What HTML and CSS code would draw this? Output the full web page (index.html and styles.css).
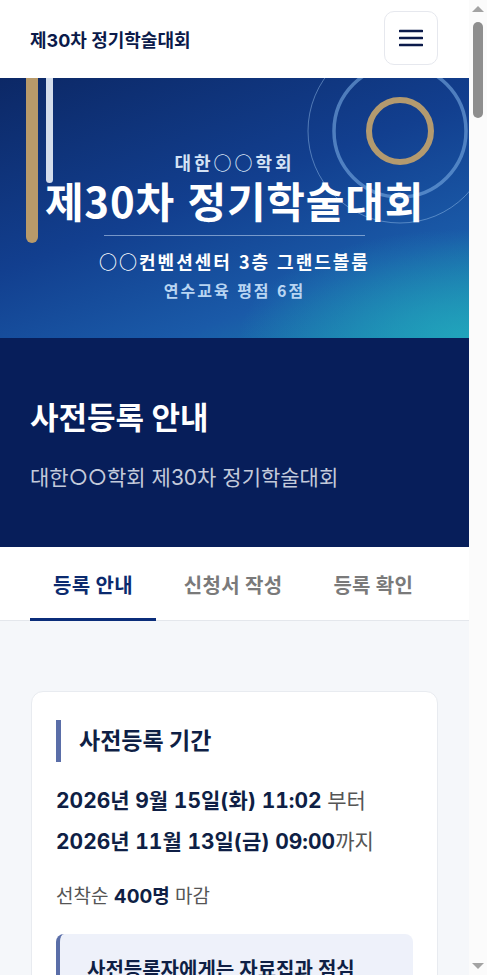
FILE: index.html
```html
<!DOCTYPE html>
<html lang="ko">
<head>
<meta charset="utf-8">
<meta name="viewport" content="width=device-width, initial-scale=1">
<title>사전등록 안내 - 제30차 정기학술대회</title>
<link rel="stylesheet" href="styles.css">
</head>
<body>
<div class="page">
<header class="site-header">
  <div class="brand">제30차 정기학술대회</div>
  <button class="menu-btn" aria-label="메뉴">
    <svg width="24" height="18" viewBox="0 0 24 18"><path d="M1 2h22M1 9h22M1 16h22" stroke="#0b1a4a" stroke-width="2.6" stroke-linecap="round"/></svg>
  </button>
</header>

<section class="hero">
  <span class="bar bar-gold"></span>
  <span class="bar bar-light"></span>
  <svg class="rings" width="200" height="200" viewBox="0 0 200 200">
    <circle cx="100" cy="100" r="92" fill="none" stroke="rgba(160,200,240,0.45)" stroke-width="1"/>
    <circle cx="100" cy="100" r="66" fill="none" stroke="rgba(120,170,225,0.6)" stroke-width="3.5"/>
    <circle cx="100" cy="100" r="31" fill="none" stroke="#b39a6f" stroke-width="6"/>
  </svg>
  <div class="hero-text">
    <p class="hero-org">대한○○학회</p>
    <h1 class="hero-title">제30차 정기학술대회</h1>
    <hr class="hero-rule">
    <p class="hero-place">○○컨벤션센터 3층 그랜드볼룸</p>
    <p class="hero-credit">연수교육 평점 6점</p>
  </div>
</section>

<section class="page-head">
  <h2 class="page-title">사전등록 안내</h2>
  <p class="page-sub">대한○○학회 제30차 정기학술대회</p>
</section>

<nav class="tabs">
  <a class="tab active">등록 안내</a>
  <a class="tab">신청서 작성</a>
  <a class="tab">등록 확인</a>
</nav>

<main class="content">
  <article class="card">
    <h3 class="card-title">사전등록 기간</h3>
    <p class="date-line"><b>2026년 9월 15일(화) 11:02</b> 부터</p>
    <p class="date-line"><b>2026년 11월 13일(금) 09:00</b>까지</p>
    <p class="limit">선착순 <b>400명</b> 마감</p>
    <div class="notice">
      <p>사전등록자에게는 자료집과 점심 식사가 제공됩니다.</p>
      <p class="notice-sub">현장등록자는 자료집 및 식사 제공이 제한될 수 있습니다.</p>
    </div>
  </article>

  <article class="card">
    <h3 class="card-title">등록비 안내</h3>
    <table class="fee">
      <thead><tr><th>구분</th><th>사전등록</th><th>현장등록</th></tr></thead>
      <tbody>
        <tr><td>정회원</td><td>50,000원</td><td>70,000원</td></tr>
        <tr><td>비회원</td><td>70,000원</td><td>90,000원</td></tr>
        <tr><td>전공의</td><td>30,000원</td><td>40,000원</td></tr>
        <tr><td>간호사·기사</td><td>20,000원</td><td>30,000원</td></tr>
        <tr><td>학생</td><td>면제</td><td>면제</td></tr>
      </tbody>
    </table>
    <p class="small">※ 등록비에는 자료집, 중식, 평점 관리비가 포함되어 있습니다.</p>
    <p class="small">※ 평생회원은 연회비가 면제됩니다.</p>
  </article>

  <article class="card">
    <h3 class="card-title">납부 방법</h3>
    <p class="text">무통장 입금 또는 신용카드 결제가 가능합니다.</p>
    <dl class="info">
      <dt>은행명</dt><dd>○○은행</dd>
      <dt>계좌번호</dt><dd>123-456789-01-234</dd>
      <dt>예금주</dt><dd>대한○○학회</dd>
    </dl>
    <p class="small">※ 입금자명은 반드시 등록자 성명으로 기재해 주십시오.</p>
    <p class="small">※ 입금 확인 후 등록이 완료되며, 확인 문자가 발송됩니다.</p>
    <p class="small">※ 단체 입금 시 사무국으로 명단을 보내주시기 바랍니다.</p>
  </article>

  <article class="card">
    <h3 class="card-title">취소 및 환불 규정</h3>
    <ul class="list">
      <li>사전등록 마감일까지 취소 시 전액 환불됩니다.</li>
      <li>사전등록 마감 이후 취소 시 환불이 불가합니다.</li>
      <li>환불은 학술대회 종료 후 일괄 처리됩니다.</li>
      <li>환불 요청은 사무국 이메일로 접수해 주십시오.</li>
      <li>카드 결제 취소는 카드사 사정에 따라 지연될 수 있습니다.</li>
    </ul>
  </article>

  <article class="card">
    <h3 class="card-title">연수평점 안내</h3>
    <p class="text">본 학술대회 참석 시 연수교육 평점 6점이 부여됩니다.</p>
    <ul class="list">
      <li>오전 세션 참석: 3점</li>
      <li>오후 세션 참석: 3점</li>
      <li>입실 및 퇴실 시 반드시 바코드를 인식해 주십시오.</li>
      <li>평점은 학술대회 종료 후 30일 이내에 등록됩니다.</li>
      <li>면허번호가 정확하지 않으면 평점 등록이 불가합니다.</li>
    </ul>
  </article>

  <article class="card">
    <h3 class="card-title">학술대회 일정</h3>
    <dl class="info">
      <dt>일시</dt><dd>2026년 11월 22일(일)</dd>
      <dt>장소</dt><dd>○○컨벤션센터 3층 그랜드볼룸</dd>
      <dt>08:30</dt><dd>등록</dd>
      <dt>09:00</dt><dd>개회사 및 축사</dd>
      <dt>09:20</dt><dd>Session Ⅰ</dd>
      <dt>10:50</dt><dd>Coffee Break</dd>
      <dt>11:10</dt><dd>Session Ⅱ</dd>
      <dt>12:30</dt><dd>점심 식사 및 총회</dd>
      <dt>13:30</dt><dd>Session Ⅲ</dd>
      <dt>15:00</dt><dd>Coffee Break</dd>
      <dt>15:20</dt><dd>Session Ⅳ</dd>
      <dt>16:50</dt><dd>Session Ⅴ</dd>
      <dt>18:00</dt><dd>폐회</dd>
    </dl>
  </article>

  <article class="card">
    <h3 class="card-title">오시는 길</h3>
    <p class="text">○○컨벤션센터 3층 그랜드볼룸</p>
    <ul class="list">
      <li>지하철: ○○역 3번 출구 도보 5분</li>
      <li>버스: ○○컨벤션센터 정류장 하차</li>
      <li>주차: 컨벤션센터 지하주차장 이용 (4시간 무료)</li>
      <li>대중교통 이용을 권장합니다.</li>
    </ul>
  </article>

  <article class="card">
    <h3 class="card-title">등록 시 유의사항</h3>
    <ul class="list">
      <li>등록 정보는 평점 등록에 사용되므로 정확히 입력해 주십시오.</li>
      <li>면허번호와 성명이 일치해야 평점이 등록됩니다.</li>
      <li>영수증은 등록 확인 메뉴에서 출력할 수 있습니다.</li>
      <li>이름표는 현장 등록데스크에서 수령하실 수 있습니다.</li>
      <li>중복 등록 시 사무국으로 연락 바랍니다.</li>
      <li>등록 정보 수정은 사전등록 마감일까지 가능합니다.</li>
    </ul>
  </article>

  <article class="card">
    <h3 class="card-title">문의처</h3>
    <dl class="info">
      <dt>사무국</dt><dd>대한○○학회 사무국</dd>
      <dt>전화</dt><dd>02-1234-5678</dd>
      <dt>팩스</dt><dd>02-1234-5679</dd>
      <dt>이메일</dt><dd>office@example.or.kr</dd>
      <dt>운영시간</dt><dd>평일 09:00 ~ 18:00</dd>
    </dl>
  </article>

  <a class="cta">사전등록 신청하기</a>
</main>

<footer class="site-footer">
  <p class="foot-name">대한○○학회</p>
  <p>주소: 서울특별시 ○○구 ○○로 123, 4층</p>
  <p>사업자등록번호: 123-45-67890 | 대표자: 홍길동</p>
  <p>전화: 02-1234-5678 | 이메일: office@example.or.kr</p>
  <p class="copy">Copyright © 대한○○학회. All rights reserved.</p>
</footer>
</div>

<div class="scrollbar" aria-hidden="true">
  <span class="sb-arrow sb-up"></span>
  <span class="sb-thumb"></span>
  <span class="sb-arrow sb-down"></span>
</div>
</body>
</html>
```

FILE: styles.css
```css
* { box-sizing: border-box; }
html, body { margin: 0; padding: 0; }
body {
  font-family: Inter, "Noto Sans CJK KR", "Noto Sans", sans-serif;
  color: #0f1f45;
  background: #fff;
  word-break: keep-all;
}
p, h1, h2, h3 { margin: 0; }

.page {
  width: 469px;
  background: #f5f7fa;
}

.site-header {
  height: 78px;
  background: #fff;
  display: flex;
  align-items: center;
  justify-content: space-between;
  padding: 0 31px 0 30px;
}
.brand {
  font-size: 18px;
  font-weight: 700;
  color: #0b1a4a;
}
.menu-btn {
  width: 54px;
  height: 54px;
  border: 1px solid #e6e8ee;
  border-radius: 10px;
  background: #fff;
  display: flex;
  align-items: center;
  justify-content: center;
  padding: 0;
  margin-top: -2px;
}

.hero {
  position: relative;
  height: 260px;
  overflow: hidden;
  background:
    radial-gradient(ellipse 70% 60% at 100% 100%, rgba(34,170,190,0.85), rgba(34,170,190,0) 70%),
    linear-gradient(160deg, #0c2866 0%, #123f8f 45%, #1a5aa8 75%, #1c86b0 100%);
  display: flex;
  align-items: flex-start;
  justify-content: center;
}
.bar {
  position: absolute;
  top: -8px;
  border-radius: 8px;
}
.bar-gold { left: 26px; width: 12px; height: 173px; background: #b89a6a; }
.bar-light { left: 46px; width: 7px; height: 113px; background: #d4ddeb; }
.rings { position: absolute; left: 300px; top: -47px; }

.hero-text {
  position: relative;
  display: flex;
  flex-direction: column;
  align-items: center;
  font-family: "Noto Sans CJK KR", sans-serif;
  padding-top: 72px;
}
.hero-org {
  font-size: 18px;
  font-weight: 700;
  color: #d4e2f4;
  line-height: 24px;
  letter-spacing: 3px;
}
.hero-title {
  font-size: 42px;
  font-weight: 700;
  color: #fff;
  line-height: 50px;
  letter-spacing: 0.8px;
  margin-top: 1px;
}
.hero-rule {
  width: 261px;
  border: 0;
  border-top: 1px solid rgba(200,220,245,0.55);
  margin: 10px 0 10px;
}
.hero-place {
  font-size: 18px;
  font-weight: 700;
  color: #fff;
  line-height: 30px;
  letter-spacing: 2px;
}
.hero-credit {
  font-size: 16px;
  font-weight: 700;
  color: #b9d5f2;
  line-height: 28px;
  letter-spacing: 2px;
}

.page-head {
  background: #071e5a;
  height: 209px;
  padding: 59px 30px 0;
}
.page-title {
  font-size: 31px;
  font-weight: 700;
  color: #fff;
  line-height: 42px;
}
.page-sub {
  font-size: 21px;
  color: #c3cadb;
  line-height: 28px;
  margin-top: 25px;
}

.tabs {
  background: #fff;
  height: 74px;
  display: flex;
  gap: 5px;
  padding: 0 30px;
  border-bottom: 1px solid #e4e7ec;
}
.tab {
  padding: 3px 23px 0;
  display: flex;
  align-items: center;
  font-size: 20px;
  font-weight: 700;
  color: #7a7a7a;
  letter-spacing: 0.3px;
  border-bottom: 3px solid transparent;
  margin-bottom: -1px;
}
.tab.active { color: #0b2a6e; border-bottom-color: #0b2d7a; }

.content {
  padding: 70px 31px 40px;
  display: flex;
  flex-direction: column;
  gap: 24px;
}
.card {
  background: #fff;
  border: 1px solid #e8ebf0;
  border-radius: 12px;
  padding: 28px 24px 30px;
}
.card-title {
  border-left: 5px solid #5a6ea8;
  padding-left: 18px;
  font-size: 23px;
  font-weight: 700;
  line-height: 42px;
  color: #0f1f45;
  margin-bottom: 18px;
}
.date-line {
  font-size: 21px;
  line-height: 41px;
  color: #555;
  font-variant-numeric: tabular-nums;
}
.date-line b { color: #0f1f45; font-weight: 700; }
.limit {
  font-size: 19px;
  color: #555;
  line-height: 30px;
  margin-top: 20px;
}
.limit b { color: #0f1f45; }
.notice {
  margin-top: 22px;
  background: #eef1fa;
  border-left: 4px solid #5a6ea8;
  border-radius: 8px;
  padding: 20px 24px 22px 27px;
}
.notice p {
  font-size: 20px;
  font-weight: 600;
  color: #0f1f45;
  line-height: 32px;
}
.notice .notice-sub {
  font-size: 15px;
  font-weight: 400;
  color: #555;
  line-height: 24px;
  margin-top: 8px;
}

.fee {
  width: 100%;
  border-collapse: collapse;
  font-size: 16px;
  margin-bottom: 16px;
}
.fee th, .fee td {
  border-bottom: 1px solid #e4e7ec;
  padding: 14px 6px;
  text-align: center;
}
.fee th { background: #f0f3f9; color: #0f1f45; font-weight: 700; }
.fee td { color: #333; }
.small { font-size: 14px; color: #666; line-height: 24px; }
.text { font-size: 17px; color: #333; line-height: 28px; margin-bottom: 14px; }
.info {
  display: grid;
  grid-template-columns: 90px 1fr;
  row-gap: 14px;
  font-size: 16px;
  margin: 0 0 16px;
}
.info dt { color: #5a6ea8; font-weight: 700; }
.info dd { margin: 0; color: #333; }
.list { margin: 0; padding-left: 20px; font-size: 16px; color: #333; line-height: 30px; }
.list li { margin-bottom: 8px; }

.cta {
  display: block;
  background: #0b2d7a;
  color: #fff;
  text-align: center;
  font-size: 19px;
  font-weight: 700;
  border-radius: 10px;
  padding: 20px 0;
  margin-top: 10px;
}

.site-footer {
  background: #0e1730;
  color: #9aa3b8;
  padding: 40px 30px 60px;
  font-size: 14px;
  line-height: 26px;
}
.foot-name { color: #fff; font-weight: 700; font-size: 17px; margin-bottom: 10px; }
.copy { margin-top: 18px; font-size: 13px; }

.scrollbar {
  position: fixed;
  top: 0;
  right: 0;
  width: 18px;
  height: 100vh;
  background: #fbfbfb;
  display: flex;
  flex-direction: column;
  align-items: center;
}
.sb-arrow {
  width: 0;
  height: 0;
  border-left: 6px solid transparent;
  border-right: 6px solid transparent;
}
.sb-up { border-bottom: 6px solid #a3a3a3; margin-top: 6px; }
.sb-down { border-top: 6px solid #a3a3a3; margin-top: auto; margin-bottom: 6px; }
.sb-thumb {
  width: 10px;
  height: 96px;
  margin-top: 10px;
  border-radius: 5px;
  background: #8e8e8e;
}
```
